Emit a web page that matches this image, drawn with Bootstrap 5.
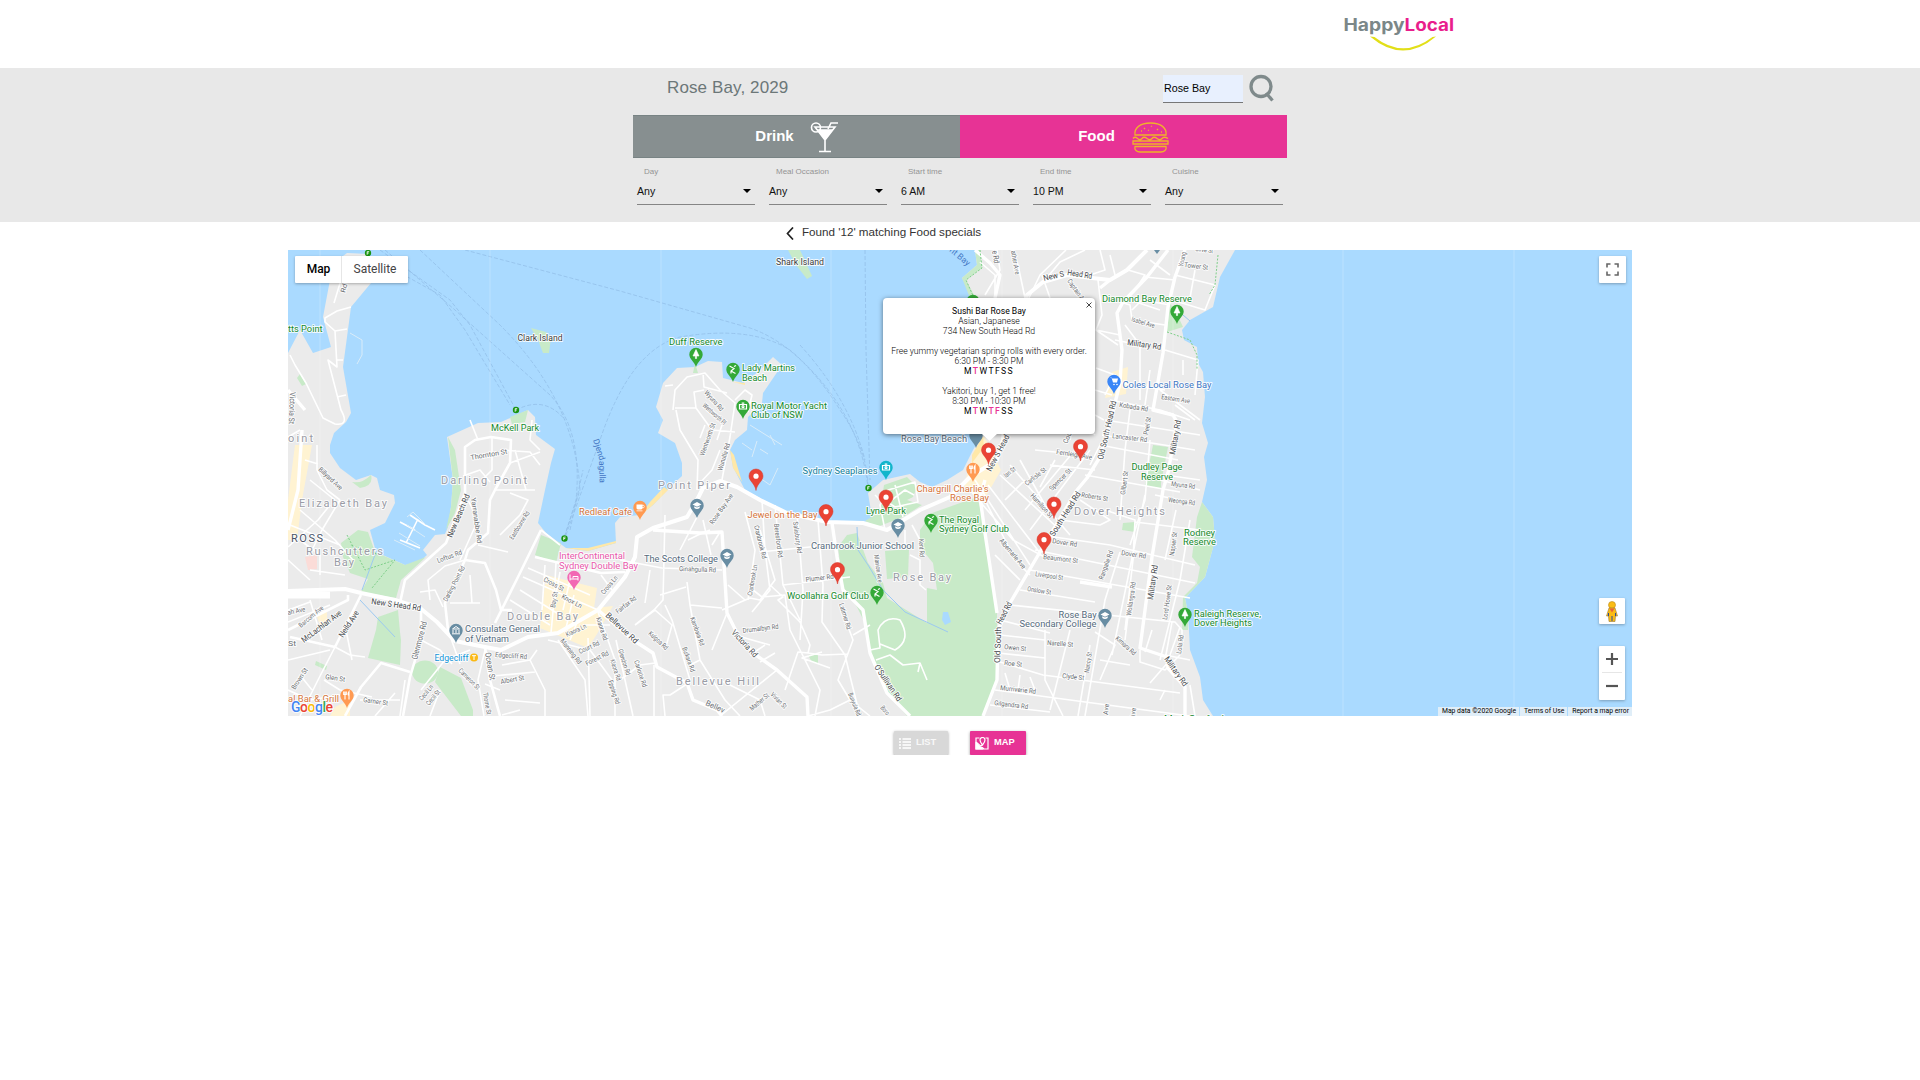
<!DOCTYPE html>
<html lang="en">
<head>
<meta charset="utf-8">
<meta name="viewport" content="width=device-width, initial-scale=1">
<title>HappyLocal</title>
<link href="https://cdn.jsdelivr.net/npm/bootstrap@5.3.0/dist/css/bootstrap.min.css" rel="stylesheet">
<style>
body{font-family:"Liberation Sans",Arial,sans-serif;color:#222;background:#fff;overflow-x:hidden}
.site-head{height:68px;padding:10px 459px 0 0}
.site-head text{font-family:Inter,sans-serif;font-weight:700;font-size:17px}
.filter-band{height:154px;background:#e8e8e8}
.band-inner{width:654px}
.place-row{height:47px;padding:0 11px 0 34px}
.place-name{font-size:17px;line-height:20px;color:#6c7778;letter-spacing:.12px;margin-top:10px}
.search-field{width:80px;height:28px;margin-top:7px;background:#e8f0fe;border:0;border-bottom:1px solid #777;font-size:10.7px;padding:0 1px 2px;color:#000;border-radius:0;outline:0}
.search-icon{margin:5px 0 0 5px}
.kind-btn{height:43px;border:0;border-radius:0;font-weight:700;font-size:15px;color:#fff!important;padding:0 0 0 1px}
.kind-drink{background:#878f90!important;border-bottom:1px solid #788384;border-top:1px solid #788384}
.kind-food{background:#e73395!important}
.filters{padding:9px 4px 0;gap:14px}
.filter-item{width:118px;height:38px;border-bottom:1px solid #858585;font-size:10.6px;color:#111}
.filter-label{font-size:8px;line-height:10px;color:#949494;padding-left:7px}
.filter-value{line-height:12px;margin-top:7.500px}
.filter-value svg{margin-right:4px}
.found{height:28px;font-size:11.650px;padding-left:786px;color:#333}
.found svg{margin:5px 8px 0 0}
.found span{line-height:20px}
.map-box{width:1344px;height:466px;margin:0 auto;background:#aadaff;overflow:hidden}
.map-box>svg{display:block}
.ctl{position:absolute;background:#fff;box-shadow:0 1px 3px rgba(0,0,0,.28);border-radius:1px}
.ctl-type{left:7px;top:6px;width:113px;height:27px;font:12px/27px Roboto,sans-serif;color:#444}
.ctl-type b{font-weight:500;color:#000;width:47px;padding-left:1px;border-right:1px solid #e6e6e6}
.ctl-full{left:1311px;top:6px;width:27px;height:27px}
.ctl-peg{left:1311px;top:348px;width:26px;height:26px}
.ctl-zoom{left:1311px;top:396px;width:26px;height:54px;padding:7px 0 8px}
.ctl-zoom i{width:20px;height:1px;background:#e6e6e6}
.credits{position:absolute;right:0;bottom:0;height:9px;font:6.8px/9px Roboto,sans-serif;color:#000;gap:1px}
.credits span{background:rgba(245,245,245,.72);padding:0 3px 0 4px;white-space:nowrap}
.bubble{position:absolute;left:595px;top:48px;width:212px;height:136px;background:#fff;border-radius:4px;box-shadow:0 1px 5px rgba(0,0,0,.5);font:300 8.650px/10px Roboto,sans-serif;color:#000;padding-top:8px}
.bubble strong{font-weight:400}
.bubble .tip{position:absolute;left:98px;top:135px}
.bubble .shut{position:absolute;right:3px;top:4px}
.days{font-weight:400;letter-spacing:1.350px}
.days em{font-style:normal;font-weight:500;color:#e73395}
.view-row{margin-top:15px;gap:22px}
.view-btn{height:24px;border:0;border-radius:1px;font-weight:700;font-size:9.300px;color:#fff!important;padding:0 0 0 5px;box-shadow:0 1px 3px rgba(0,0,0,.4)}
.view-list{width:54px;background:#d8d8d8!important;color:#f8f8f8!important}
.view-list svg{margin-right:5px}
.view-map{width:56px;background:#e73395!important}
.view-map svg{margin-right:5px}
.map-box text{font-family:Roboto,sans-serif}
.halo text{paint-order:stroke;stroke:#fff;stroke-width:2px;stroke-linejoin:round;stroke-opacity:.85}
</style>
<script src="https://cdn.jsdelivr.net/npm/bootstrap@5.3.0/dist/js/bootstrap.bundle.min.js"></script>
</head>
<body>
<header class="site-head d-flex justify-content-end">
<svg width="120" height="46" viewBox="1341 10 120 46">
<text x="1343.500" y="30.700" textLength="61" lengthAdjust="spacingAndGlyphs" fill="#7b8788">Happy</text><text x="1404.500" y="30.700" textLength="49.500" lengthAdjust="spacingAndGlyphs" fill="#e91e8c">Local</text>
<path d="M1370 36.500Q1403 64.500 1436 36.500L1432.500 37Q1403 59.500 1374.500 37Z" fill="#e2df18"/>
</svg>
</header>
<section class="filter-band">
<div class="band-inner mx-auto">
<div class="place-row d-flex align-items-start">
<div class="place-name me-auto">Rose Bay, 2029</div>
<input class="search-field" value="Rose Bay" aria-label="Suburb">
<svg class="search-icon" width="28" height="30" viewBox="0 0 28 30" fill="none" stroke="#7f8a8b" stroke-width="3.3"><ellipse cx="13" cy="13.500" rx="10" ry="10"/><path d="M18 20L24.500 27.500"/></svg>
</div>
<div class="d-flex">
<button class="btn kind-btn kind-drink w-50 d-flex align-items-center justify-content-center"><span>Drink</span>
<svg class="ms-3" width="29" height="32" viewBox="0 0 29 32" fill="none" stroke="#fff" stroke-width="1.600"><circle cx="6" cy="6.500" r="4.500"/><path d="M5 6H25L15 19ZM15 18V30M9 30.500H21M18 8L21 2H28" /><path d="M8 9H22L15 18Z" fill="#fff"/></svg></button>
<button class="btn kind-btn kind-food w-50 d-flex align-items-center justify-content-center"><span>Food</span>
<svg class="ms-3" width="39" height="32" viewBox="0 0 39 32" fill="none" stroke="#f0b429" stroke-width="1.300"><path d="M4 14C3 7 9 2 19.500 2S36 7 35 14ZM2 17.500Q4 15 6.500 17.500T11 17.500T16 17.500T21 17.500T26 17.500T31 17.500T37 17.500M2 20H37V23H2ZM4 25.500H35C36 29 33 31 30 31H9C6 31 3 29 4 25.500Z"/><path d="M13 7l1 1M20 5l1 .5M26 8l1 1M17 9l1 .5M10 10h1M30 11h1"/></svg></button>
</div>
<div class="filters d-flex">
<div class="filter-item"><div class="filter-label">Day</div><div class="filter-value d-flex justify-content-between align-items-center">Any<svg width="8" height="4"><path d="M0 0H8L4 4Z"/></svg></div></div>
<div class="filter-item"><div class="filter-label">Meal Occasion</div><div class="filter-value d-flex justify-content-between align-items-center">Any<svg width="8" height="4"><path d="M0 0H8L4 4Z"/></svg></div></div>
<div class="filter-item"><div class="filter-label">Start time</div><div class="filter-value d-flex justify-content-between align-items-center">6 AM<svg width="8" height="4"><path d="M0 0H8L4 4Z"/></svg></div></div>
<div class="filter-item"><div class="filter-label">End time</div><div class="filter-value d-flex justify-content-between align-items-center">10 PM<svg width="8" height="4"><path d="M0 0H8L4 4Z"/></svg></div></div>
<div class="filter-item"><div class="filter-label">Cuisine</div><div class="filter-value d-flex justify-content-between align-items-center">Any<svg width="8" height="4"><path d="M0 0H8L4 4Z"/></svg></div></div>
</div>
</div>
</section>
<div class="found d-flex align-items-start"><svg width="8" height="13" viewBox="0 0 8 13" fill="none" stroke="#222" stroke-width="1.700"><path d="M7 .5L1.500 6.500L7 12.500"/></svg><span>Found '12' matching Food specials</span></div>

<main class="map-box position-relative">
<svg width="1344" height="466" viewBox="288 250 1344 466">
<defs>
<path id="drop" d="M0 1C-1.500-4-6.700-7-6.700-11.500A6.700 6.700 0 0 1 6.700-11.500C6.700-7 1.500-4 0 1Z"/>
<g id="red"><path d="M0 1C-1-6-7-8.500-7-13.500A7 7 0 0 1 7-13.500C7-8.500 1-6 0 1Z" fill="#ea4335" stroke="#d5382b" stroke-width=".5"/><circle cy="-13.300" r="2.600" fill="#fff"/></g>
<g id="tree" fill="#fff"><path d="M0-16.500L-3-10H-.6V-7.500H.6V-10H3Z" stroke="#fff" stroke-width=".6"/></g>
<g id="cap" fill="#fff"><path d="M-4.500-12.500L0-15L4.500-12.500L0-10.300ZM-2.700-10.800V-9Q0-7 2.700-9V-10.800L0-9.500Z"/></g>
<g id="golf" stroke="#fff" stroke-width="1.200" fill="none"><path d="M-3.500-15L1-12.500L-2-10V-7.500M-2-10L2.500-7.500M1-14.500L3-15.500"/></g>
<g id="fork" stroke="#fff" stroke-width="1.100" fill="none"><path d="M-2-15.500V-7.500M-3.300-15.500V-12.500H-.7V-15.500M2-7.500V-15.500Q0-12.500 2-11.500"/></g>
<g id="cup" fill="#fff"><path d="M-3.500-14.500H2.500V-11Q2.500-9.500-.5-9.500T-3.500-11ZM-3.500-8.500H2.500V-7.700H-3.500Z"/><circle cx="3" cy="-12.500" r="1.300" fill="none" stroke="#fff" stroke-width=".7"/></g>
<g id="box" fill="none" stroke="#fff" stroke-width="1.200"><path d="M-3.500-13.500H3.500V-9H-3.500ZM-1.300-14.800H1.300"/><circle cy="-11.300" r="1"/></g>
<g id="ferry"><circle r="3.200" fill="#1a9412"/><path d="M-.8 1.700V-1.400H1.200M-.8 0H.8" stroke="#fff" stroke-width=".8" fill="none"/></g>
</defs>
<rect x="288" y="250" width="1344" height="466" fill="#aadaff"/>
<g id="land" fill="#ebebeb">
<path d="M288 353L300 330L313 353L331 347L323 317L330 280L335 262L347 253L368 254L376 262L371 283L351 307L343 367L351 413L346 422L334 433L330 445V453L340 468L356 480L371 475L377 478L380 490L394 495L395 503L385 523L370 530L376 552L405 565L418 563L427 555L423 550L435 535L445 534L448 527L451 507L453 480L447 437L478 423L501 422L528 410L535 417L536 435L555 449L551 463L545 490L538 523L546 533L566 548L588 551L616 543L615 523L620 517L640 515L653 505L670 487L682 476L682 463L675 443L658 433L663 420L656 407L663 383L677 368L695 367L708 361L722 362L723 378L743 383L758 372L773 357L782 365L763 393L762 403L748 417L747 430L735 440L730 450L733 467L745 490L760 498L787 513L813 520L865 523L872 517L868 493L883 480L910 474L920 482L932 487L947 480L963 470L973 450L982 435L985 380L972 295L962 278L977 265L975 250H1235L1220 277L1213 307L1190 320L1182 330L1184 340L1197 347L1198 363L1203 372L1205 397L1202 423L1208 443L1204 457L1207 480L1202 502L1213 517L1215 540L1205 577L1185 598L1188 613L1190 650L1200 677L1203 700L1213 716H288Z"/>
</g>
<g id="parks" fill="#c8eac8">
<path d="M843 587L838 547L847 535L857 533L868 563L883 583L887 598L927 623V588L937 590L933 563L920 547V530L932 513L977 497L980 507L985 533L997 613V680L983 716H907L887 693L870 653L865 623L857 607Z"/>
<path d="M884 485L907 477L917 487L913 497L907 500L922 505L903 517L877 527L865 521L880 512Z"/>
<path d="M885 551L909 549L908 577L887 579ZM341 543L358 530L368 532L375 552L405 565L426 557L401 580L396 598L361 592L368 579L350 573L343 557Z"/>
<path d="M378 617L398 610L400 632L401 640L400 665L368 658L376 630ZM440 667L461 678L473 710V716H461L435 682Z"/>
<ellipse cx="425" cy="672" rx="13" ry="11.500"/>
<path d="M448 437L455 450L461 490L455 513L446 530L451 507L453 480ZM541 535L561 543L556 563L535 555ZM1170 303L1178 316L1183 327L1167 332ZM1153 445L1168 447L1160 488L1145 485Z"/>
<path d="M1202 502L1213 517L1215 540L1205 577L1185 598L1188 613V630H1182L1183 597L1197 583L1200 567L1192 557L1197 517ZM1123 523L1135 522V532L1122 530ZM788 250H800L812 276L807 279L796 265ZM531 328L546 332L551 338L549 353H543L538 340ZM510 417L528 410L525 422L512 424ZM962 278L977 265L975 250H980L982 268L966 280L974 295V298H970ZM808 655L818 654V664L812 662ZM352 482Q362 484 371 475Q374 486 360 488ZM300 374L306 384L302 386L297 378ZM316 661L327 666L326 670L315 665ZM695 363L698 373H693ZM1146 480L1161 483V488L1146 486Z"/>
<ellipse cx="892" cy="638" rx="11" ry="9"/>
</g>
<g id="shops" fill="#fff3d2">
<path d="M288 500L295 445H312L302 500L297 540H288ZM546 575L597 588L594 608L613 606L597 634L588 648L540 628ZM966 478L975 450L984 436L1001 470L984 500L964 488ZM1112 372L1128 367L1126 394L1105 398ZM316 614L327 612V622L320 625ZM335 707L350 700V716H330Z"/>
<path d="M733 382L745 385V383ZM566 548L588 551L616 543V541L588 548ZM640 516L653 505L668 490L664 487L650 502ZM730 450L733 468L742 482L734 455ZM972 455L983 436L984 447L972 463Z" fill="#ffe8a8"/>
<path d="M305 557L317 555V569L308 570Z" fill="#fbdcd8"/>
</g>
<g id="minor" fill="none" stroke="#fff" stroke-width="1.600" stroke-linejoin="round">
<path d="M334 303L341 280M351 307L337 311L325 318V322L335 331L337 367L328 360L341 410Q350 426 335 424L323 418L306 383L295 365L290 355M335 331L347 329M337 360H343M337 397L346 395M317 470L327 490L340 500M288 437L300 430M317 470V445M305 460L318 464M310 480L335 500"/>
<path d="M300 510L335 540L353 560M288 547L318 520L330 505M288 560L310 580M340 500L322 530L312 550M310 570L345 575M300 540L320 555V575M290 525L340 545M288 610L310 602M288 622L330 605M288 660L330 650M300 716L318 680L335 647L350 655L365 657M310 600L322 640M345 625L352 660M288 690L310 700L340 695M300 675L312 690M324 680L340 690L372 697M375 716L395 693M360 700H400M421 690L445 660L470 650M430 716L440 690M405 680L400 716M421 640L440 650L452 664M448 630L460 664M485 650L478 680L484 716M500 690L485 684"/>
<path d="M502 665L530 660L545 690V716M493 676L535 672M505 700L540 703M502 715L520 710M537 650L530 660M541 530L560 545M556 563L554 600L551 633M523 577L598 610M528 568L590 595M545 565L542 610M560 572L555 600M570 580L563 610M574 595L566 628M520 590L560 615M510 600L550 625M548 640L590 650L612 680M570 640L578 620M588 638L590 716M598 612L615 660V716M616 640L625 680L633 716M558 640L585 680L588 716M583 625H610M601 575L612 590M603 605L625 575M470 420L478 440M492 437V470L482 480M463 476L480 470L490 482M500 450L530 452L540 465M510 463L540 452M515 450L526 490M532 420L530 440L540 450M495 490H535M510 493L528 500L520 515L500 535M478 545L508 552M460 560L478 520L468 500M430 600L428 580L445 566L465 560M443 607L435 590L420 592M450 603H480M470 575L472 603M415 530L400 522M410 515L425 525L435 530M400 540L420 548M406 543L418 519"/>
<path d="M673 410L675 390L687 377L705 373L720 390L735 403L730 437L721 485M675 408L696 408L712 430L735 432M703 373L704 387L727 393M696 408L694 392L704 390M676 410L680 430L698 460L697 490M720 450L712 470L698 485M722 425L717 440M735 400L745 390L752 395L748 412M665 386L673 385M700 438L705 425M703 520L711 555M697 517L680 550M665 515L663 600L654 610L635 625M620 560L662 568L722 570M650 570L645 603M687 582L690 605L700 660L725 700L740 716M686 587L660 595M690 605L722 608M722 610L750 598L760 600L775 580L760 530M728 585L745 600M745 512L755 550L748 600M762 500L765 550L770 590L752 612M770 585L783 597L778 600L800 622L810 645L808 653L798 652L785 690M775 505L783 585L800 620M797 513L803 590L800 640M818 520L823 585L822 622L845 655L851 680L860 716M760 552L830 545M783 585L850 577M840 605L853 640L838 680L850 700L870 716M853 635L870 625M753 590L762 597L785 595L790 630L820 690L815 716M665 605L672 620L690 680M635 625L655 610L672 625L665 650M700 660L690 665M620 680L640 665L655 663M654 665V716M690 682L670 695H663L665 716M720 680L760 700L765 716M727 613L712 650M735 635L752 640L770 645M750 655L765 645M760 662L775 653M777 670L720 716M808 653L822 655L848 654M688 540L698 535L710 530M712 545L720 532M822 652L802 658L830 668M808 716L830 710L850 700"/>
<path d="M885 530L880 505L888 490L915 482L918 502L895 507L880 497M875 495L885 505L905 490L914 495M895 485L903 517M910 555L920 560V585L926 590M912 525L920 540M905 550V530M870 650L880 648L878 630Q885 615 900 620Q912 640 895 650L880 644M876 660L890 655L903 665L920 663L927 680M920 663L918 672"/>
<path d="M970 490L1013 540L1050 560M985 500L1015 560L1030 575M995 555L1020 580M975 480L1030 565M988 485L1040 553M1000 475L1060 530M1010 465L1070 535M1020 460L1045 505M1040 487L1055 460M1025 510L1075 450M1030 530L1090 450M1005 500L1025 480M1060 520L1100 525L1110 520L1080 500M1085 475L1180 492M1090 465L1100 445L1178 460M1050 465L1095 470M1035 450L1085 455M1070 440L1075 415L1095 435M1040 535L1110 545L1195 565M1035 550L1195 583M1030 570L1190 598M1020 590L1095 602M1010 605L1175 622L1182 630V640M1000 620L1050 633M1000 635L1045 640M998 653L1045 658M1000 662L1043 675L1180 693M995 690L1190 716M990 705L1050 712M1120 552L1105 600L1085 716M1105 510L1135 520L1133 560L1125 630M1145 495L1112 655M1176 510L1165 560M1190 520L1180 580L1160 660M1130 600L1125 640M1152 630L1145 652M1172 622L1165 660M1180 627L1170 655M1095 632L1115 645L1100 680M1045 630V680L1063 716M1070 630L1050 710M1090 645L1078 716M1140 650V662L1165 670L1180 655M1150 683L1170 660M1100 660L1130 665M1190 660L1165 655M1190 685L1195 716M1165 690L1160 700M1005 673L1010 690M1020 675L1018 690M1030 677L1035 690M1135 522L1200 530M1155 495L1195 503M1160 480L1200 490"/>
<path d="M1100 250L1105 270L1090 275M1085 250L1060 262L1045 280M1066 250L1040 275L1028 300M997 250L1000 270L985 295M980 262L995 275V295M1012 250L1018 265L1025 298M1042 275L1050 298M1098 280L1102 315L1096 330L1118 345M1110 255L1115 275M1128 270L1145 275L1135 290M1145 277L1175 280M1175 275L1215 285L1205 310L1172 300M1195 270L1190 298M1150 260L1170 275M1120 302L1130 305L1132 320L1165 325M1132 310L1142 300L1170 305M1125 325L1140 345L1115 340M1160 310L1130 300M1096 330L1120 335M1165 350L1198 360L1195 395M1183 360V375M1140 345V400M1120 383L1165 390M1150 370L1145 405M1160 390L1200 420M1175 405L1195 420M1110 400L1160 410L1190 420M1105 420L1200 435M1102 435L1195 450M1130 410L1125 450L1120 520M1150 440L1145 500L1130 545M1096 368L1115 375L1105 395M1104 420L1095 415M1165 475L1200 480M1095 390L1112 395"/>
</g>
<g id="major" fill="none" stroke="#fff" stroke-width="3.400" stroke-linejoin="round">
<path d="M288 591L345 589L361 593L395 600L420 608L437 622L455 641L485 647L501 650L528 637L558 633L598 610L625 577L635 557L637 537L653 528L687 517L697 500L703 488L720 481L737 487L760 500L787 513L827 522L863 523L887 530L920 510L950 497L970 477L997 460L1003 440L1010 350L1027 295L1043 282L1067 275L1092 278L1110 280L1127 270L1147 250" stroke-width="4"/>
<path d="M288 595H330" stroke-width="7"/>
<path d="M1168 250L1147 277L1123 302L1117 313L1122 350L1120 383L1110 423L1100 457L1087 478L1077 490L1047 540L1010 603L998 630L997 680L983 716M1185 250L1175 277L1168 307L1163 353L1153 410L1173 415L1177 422L1168 473L1163 490L1152 557L1142 633L1140 648L1167 657L1168 668L1185 687V716"/>
<path d="M465 493L446 543L405 580L400 603M465 493V447L475 440L491 437L511 440L510 463L495 490L490 500L488 533L468 550L465 560L445 603L448 630L455 641M465 560L485 563L496 590L501 610L512 610M541 530L518 577L495 623M535 557L601 573L625 572M485 647L490 680L500 716M421 610V640L410 677L403 716M410 672L381 663L361 687L345 716M361 595L335 647L290 637M348 595V600L288 630" stroke-width="2.600"/>
<path d="M653 530L700 533L722 532L727 613L738 635L753 653L777 670L807 697L808 716M598 610L633 640L653 653L657 667L687 683L693 700L717 710L722 716M832 523L837 557L843 590L863 610L870 653L887 693L910 716M980 497L985 533L997 613M985 480L980 497M288 390L305 410M302 430L298 490L288 530M975 250L990 263L1000 275L995 298M1110 280L1100 288"/>
<path d="M1080 582L1112 587"/>
</g>
<g fill="none" stroke="#9cc9f2"><path d="M857 527L858 550L868 565L883 590L905 612L948 632M360 600L395 637M376 552L362 590M1183 315L1190 321"/><path d="M942 620L943 612L948 612L951 622L945 625Z" fill="#aadaff" stroke="none"/></g>
<g fill="none" stroke="#7fcf8a" stroke-dasharray="2 1.500"><path d="M347 535L365 570L395 560L372 588M380 555L350 545M1167 332L1190 340L1197 355V370M1218 255L1215 285L1209 295M980 250L982 268L966 280L974 298"/></g>
<g id="ferries" fill="none" stroke="#93bfe8" stroke-width=".8" stroke-dasharray="4 2">
<path d="M380 250L450 300L470 325L516 410M370 256L440 295L465 330L510 405M420 250L500 325Q575 400 580 490L565 535M385 250L455 310L550 395Q583 430 576 500L565 535M516 410Q545 395 565 420M465 250L620 291L750 328Q800 345 840 410Q868 450 868 488M566 535L600 440Q630 350 680 337Q750 325 790 350Q860 410 868 488M865 250L866 350L870 480M800 345Q850 400 865 460M570 530L583 470"/></g>
<path d="M320 250V716M490 250V716M661 250V716M831 250V716M1002 250V716M1173 250V716M1343 250V716M1514 250V716" stroke="#fff" opacity=".22"/>
<g fill="none" stroke="#d9ecf9" stroke-width="1"><path d="M750 425L782 445M770 435L775 445M742 443L752 450M757 441L752 457M760 449L768 454M778 468L770 485L760 478M350 333L362 340V355L357 364M394 540L415 550M399 533L420 546M407 525L425 537M413 512L426 525M407 517L413 512"/></g>

<g id="areas" class="halo" font-size="11" fill="#9a9ca6" style="letter-spacing:2px">
<text x="288" y="442" textLength="27">oint</text><text x="299" y="507" textLength="90">Elizabeth Bay</text><text x="306" y="555" textLength="79">Rushcutters</text><text x="334" y="566" textLength="22">Bay</text>
<text x="441" y="484" textLength="88">Darling Point</text><text x="507" y="620" textLength="73">Double Bay</text><text x="658" y="489" textLength="74">Point Piper</text><text x="676" y="685" textLength="85">Bellevue Hill</text><text x="893" y="581" textLength="60">Rose Bay</text><text x="1074" y="514.500" textLength="93">Dover Heights</text>
<text x="291" y="542" textLength="34" fill="#4a5468">ROSS</text>
</g>
<g id="streets" class="halo" font-size="6.900" fill="#6b6f73">
<text transform="translate(471 460) rotate(-10)" textLength="37">Thornton St</text><text transform="translate(318 470) rotate(43)" textLength="30">Billyard Ave</text><text transform="translate(345 293) rotate(-75)" textLength="9">Rd</text><text transform="translate(290 392) rotate(92)" textLength="32" font-size="8">Victoria St</text>
<text transform="translate(452 538) rotate(-67)" textLength="46" font-size="8.300" fill="#44474a">New Beach Rd</text><text transform="translate(471 498) rotate(82)" textLength="46">Yarranabbe Rd</text><text transform="translate(513 540) rotate(-58)" textLength="32">Eastbourne Rd</text><text transform="translate(438 563) rotate(-20)" textLength="26">Loftus Rd</text><text transform="translate(447 602) rotate(-62)" textLength="39">Darling Point Rd</text>
<text transform="translate(371 604) rotate(8)" textLength="50" font-size="8.300" fill="#44474a">New S Head Rd</text><text transform="translate(304 643) rotate(-37)" textLength="48" font-size="8.300" fill="#44474a">McLachlan Ave</text><text transform="translate(343 638) rotate(-57)" textLength="30" font-size="8.300" fill="#44474a">Neild Ave</text><text transform="translate(301 628) rotate(-40)" textLength="30">Barcom Ave</text><text transform="translate(417 660) rotate(-75)" textLength="39" font-size="8.300">Glenmore Rd</text><text transform="translate(288 615) rotate(-12)" textLength="18">ah Ave</text><text x="288" y="646" textLength="8" font-size="8">St</text><text transform="translate(295 690) rotate(-57)" textLength="24">Brown St</text><text transform="translate(325 679) rotate(8)" textLength="20">Glen St</text><text transform="translate(363 702) rotate(8)" textLength="25">Garner St</text><text transform="translate(422 701) rotate(-50)" textLength="18">Cecil Ln</text><text transform="translate(429 706) rotate(-50)" textLength="18">Cecil St</text><text transform="translate(458 671) rotate(45)" textLength="27">Cameron St</text><text transform="translate(483 693) rotate(80)" textLength="22">Thorne St</text><text transform="translate(485 653) rotate(80)" textLength="28" font-size="8.300">Ocean St</text><text transform="translate(495 657) rotate(4)" textLength="32">Edgecliff Rd</text><text transform="translate(501 684) rotate(-10)" textLength="24">Albert St</text>
<text transform="translate(543 581) rotate(28)" textLength="22">Cross St</text><text transform="translate(561 598) rotate(28)" textLength="22">Knox Ln</text><text transform="translate(555 608) rotate(-80)" textLength="16">Bay St</text><text transform="translate(567 637) rotate(-25)" textLength="22">Kiaora Ln</text><text transform="translate(560 641) rotate(52)" textLength="30">Manning Rd</text><text transform="translate(580 654) rotate(-25)" textLength="22">Court Rd</text><text transform="translate(587 666) rotate(-27)" textLength="25">Forest Rd</text><text transform="translate(604 595) rotate(-50)" textLength="22">Cross Ln</text><text transform="translate(596 618) rotate(72)" textLength="24">Kiaora Rd</text><text transform="translate(610 660) rotate(72)" textLength="22">Kiaora Rd</text><text transform="translate(618 650) rotate(72)" textLength="27">Glendon Rd</text><text transform="translate(608 681) rotate(72)" textLength="25">Epping Rd</text><text transform="translate(605 616) rotate(43)" textLength="41" font-size="8.300" fill="#44474a">Bellevue Rd</text><text transform="translate(618 614) rotate(-38)" textLength="24">Fairfax Rd</text><text transform="translate(634 661) rotate(72)" textLength="28">Carlotte Rd</text><text transform="translate(648 634) rotate(43)" textLength="24">Kulgoa Rd</text><text transform="translate(690 618) rotate(70)" textLength="30">Kambala Rd</text><text transform="translate(682 648) rotate(70)" textLength="26">Bulkara Rd</text><text transform="translate(705 705) rotate(24)" textLength="20" font-size="8">Bellev</text>
<text transform="translate(704 393) rotate(48)" textLength="25">Wyuna Rd</text><text transform="translate(702 406) rotate(42)" textLength="29">Wentworth Pl</text><text transform="translate(704 456) rotate(-70)" textLength="34">Wentworth St</text><text transform="translate(722 471) rotate(-73)" textLength="28">Wunulla Rd</text><text transform="translate(713 525) rotate(-55)" textLength="36">Rose Bay Ave</text><text transform="translate(754 526) rotate(76)" textLength="34">Cranbrook Rd</text><text transform="translate(774 524) rotate(83)" textLength="34">Beresford Rd</text><text transform="translate(793 522) rotate(82)" textLength="32">Salisbury Rd</text><text transform="translate(752 596) rotate(-80)" textLength="31">Cranbrook Ln</text><text transform="translate(679 571) rotate(2)" textLength="37">Ginahgulla Rd</text><text transform="translate(806 582) rotate(-7)" textLength="28">Plumer Rd</text><text transform="translate(839 604) rotate(73)" textLength="27">Latimer Rd</text><text transform="translate(743 633) rotate(-7)" textLength="36">Drumalbyn Rd</text><text transform="translate(731 633) rotate(47)" textLength="34" font-size="8.300" fill="#44474a">Victoria Rd</text><text transform="translate(770 695) rotate(45)" textLength="20">Vivian St</text><text transform="translate(752 711) rotate(-40)" textLength="23">Mather St</text><text transform="translate(848 694) rotate(68)" textLength="24">Bunyula Rd</text><text transform="translate(880 708) rotate(50)" textLength="10">Boro</text><text transform="translate(874 667) rotate(56)" textLength="42" font-size="8.300" fill="#44474a">O'Sullivan Rd</text><text transform="translate(874 555) rotate(82)" textLength="28">Manion Ave</text><text transform="translate(919 539) rotate(88)" textLength="18">Kent Rd</text>
<text transform="translate(1000 663) rotate(-88)" textLength="36" font-size="8.300" fill="#44474a">Old South</text><text transform="translate(1001 625) rotate(-62)" textLength="24" font-size="8.300" fill="#44474a">Head Rd</text><text transform="translate(1054 537) rotate(-58)" textLength="51" font-size="8.300" fill="#44474a">South Head Rd</text><text transform="translate(1103 460) rotate(-77)" textLength="60" font-size="8.300" fill="#44474a">Old South Head Rd</text><text transform="translate(1127 345) rotate(8)" textLength="34" font-size="8.300" fill="#44474a">Military Rd</text><text transform="translate(1175 455) rotate(-80)" textLength="35" font-size="8.300" fill="#44474a">Military Rd</text><text transform="translate(1153 600) rotate(-82)" textLength="35" font-size="8.300" fill="#44474a">Military Rd</text><text transform="translate(1164 659) rotate(55)" textLength="34" font-size="8.300" fill="#44474a">Military Rd</text><text transform="translate(991 472) rotate(-62)" textLength="40" font-size="8.300" fill="#44474a">New S Head</text>
<text transform="translate(1044 281) rotate(-13)" textLength="21" font-size="8.300" fill="#44474a">New S</text><text transform="translate(1067 275) rotate(9)" textLength="25" font-size="8.300" fill="#44474a">Head Rd</text><text transform="translate(1067 281) rotate(55)" textLength="24">Captain A</text><text transform="translate(992 251) rotate(80)" textLength="13" font-size="8">e Rd</text><text transform="translate(1011 251) rotate(80)" textLength="24">ather Ave</text><text transform="translate(1183 267) rotate(-78)" textLength="15">Young</text><text transform="translate(1184 267) rotate(7)" textLength="24">Tower St</text><text transform="translate(1195 251) rotate(7)" textLength="18">Clive St</text>
<text transform="translate(1131 321) rotate(17)" textLength="24">Isabel Ave</text><text transform="translate(1161 399) rotate(9)" textLength="29">Eastern Ave</text><text transform="translate(1119 407) rotate(9)" textLength="29">Kobada Rd</text><text transform="translate(1148 435) rotate(-80)" textLength="18">Peel St</text><text transform="translate(1112 438) rotate(7)" textLength="35">Lancaster Rd</text><text transform="translate(1056 454) rotate(9)" textLength="36">Fernleigh Ave</text><text transform="translate(1067 444) rotate(-65)" textLength="16">Court</text><text transform="translate(1027 486) rotate(-38)" textLength="25">Carlisle St</text><text transform="translate(1052 491) rotate(-45)" textLength="28">Spencer St</text><text transform="translate(1030 496) rotate(48)" textLength="30">Hamilton St</text><text transform="translate(1006 478) rotate(-38)" textLength="13">Ian St</text><text transform="translate(1081 497) rotate(9)" textLength="27">Roberts St</text><text transform="translate(1125 495) rotate(-82)" textLength="24">Gilbert St</text><text transform="translate(1171 486) rotate(7)" textLength="24">Myuna Rd</text><text transform="translate(1168 502) rotate(7)" textLength="27">Weonga Rd</text><text transform="translate(999 541) rotate(50)" textLength="37">Albemarle Ave</text><text transform="translate(1052 543) rotate(9)" textLength="25">Dover Rd</text><text transform="translate(1043 559) rotate(7)" textLength="35">Beaumont St</text><text transform="translate(1035 576) rotate(9)" textLength="28">Liverpool St</text><text transform="translate(1027 591) rotate(9)" textLength="24">Onslow St</text><text transform="translate(1121 555) rotate(8)" textLength="25">Dover Rd</text><text transform="translate(1103 580) rotate(-70)" textLength="30">Rangalie Rd</text><text transform="translate(1174 556) rotate(-82)" textLength="24">Napier St</text><text transform="translate(1131 616) rotate(-82)" textLength="34">Wollangra Rd</text><text transform="translate(1167 620) rotate(-82)" textLength="35">Lord Howe St</text><text transform="translate(1181 654) rotate(-82)" textLength="19">Lola Rd</text><text transform="translate(1115 639) rotate(42)" textLength="25">Kimara Rd</text><text transform="translate(1047 645) rotate(4)" textLength="26">Narelle St</text><text transform="translate(1004 649) rotate(6)" textLength="22">Owen St</text><text transform="translate(1004 665) rotate(6)" textLength="18">Roe St</text><text transform="translate(1089 673) rotate(-82)" textLength="21">Nancy St</text><text transform="translate(1062 678) rotate(6)" textLength="22">Clyde St</text><text transform="translate(1000 690) rotate(6)" textLength="36">Murriverie Rd</text><text transform="translate(994 705) rotate(7)" textLength="34">Gilgandra Rd</text><text transform="translate(1108 715) rotate(-85)" textLength="11">Ave</text><text transform="translate(1135 719) rotate(-85)" textLength="11">Ave</text>
</g>
<g id="water-names" font-size="8.500" fill="#4477c4"><text transform="translate(593 440) rotate(72)" textLength="22">Djend</text><text transform="translate(599 461) rotate(88)" textLength="22">agulla</text><text transform="translate(949 251) rotate(40)" textLength="24">nt Bay</text></g>

<g id="pins">
<g fill="#34a938"><g transform="translate(696 366)"><use href="#drop"/><use href="#tree"/></g><g transform="translate(733 381)"><use href="#drop"/><use href="#golf"/></g><g transform="translate(743 418)"><use href="#drop"/><use href="#box"/></g><g transform="translate(931 532)"><use href="#drop"/><use href="#golf"/></g><g transform="translate(877 604)"><use href="#drop"/><use href="#golf"/></g><g transform="translate(1177 323)"><use href="#drop"/><use href="#tree"/></g><g transform="translate(1185 626)"><use href="#drop"/><use href="#tree"/></g><g transform="translate(973 313)"><use href="#drop"/></g></g>
<g fill="#688da3"><g transform="translate(697 517)"><use href="#drop"/><use href="#cap"/></g><g transform="translate(727 567)"><use href="#drop"/><use href="#cap"/></g><g transform="translate(898 537)"><use href="#drop"/><use href="#cap"/></g><g transform="translate(1105 627)"><use href="#drop"/><use href="#cap"/></g><g transform="translate(976 447)"><use href="#drop"/></g><g transform="translate(456 642)"><use href="#drop"/><path d="M-3.500-13L0-15.500L3.500-13ZM-3-12V-9M0-12V-9M3-12V-9M-4-8.200H4" stroke="#fff" stroke-width="1"/></g><path d="M1154 250H1160L1157 254Z"/></g>
<g fill="#ff9a52"><g transform="translate(640 519)"><use href="#drop"/><use href="#cup"/></g><g transform="translate(973 481)"><use href="#drop"/><use href="#fork"/></g><g transform="translate(347 707)"><use href="#drop"/><use href="#fork"/></g></g>
<g transform="translate(886 479)" fill="#12b5cb"><use href="#drop"/><use href="#box"/></g>
<g transform="translate(574 589)" fill="#f268b3"><use href="#drop"/><path d="M-4-14.500V-8.500M-4-10H4V-8.500M4-10V-12.500H-1V-10.500" stroke="#fff" fill="none"/></g>
<g transform="translate(1114 393)" fill="#3a86f7"><use href="#drop"/><path d="M-4-15.500H-2.500L-1-10.500H3L4-14.500H-2Z" fill="#fff"/><circle cx="0" cy="-8.500" r=".8" fill="#fff"/><circle cx="3" cy="-8.500" r=".8" fill="#fff"/></g>
<use href="#ferry" x="368" y="253"/><use href="#ferry" x="516" y="410"/><use href="#ferry" x="564.500" y="538.500"/><use href="#ferry" x="868.500" y="488"/>
<circle cx="474" cy="657.500" r="4" fill="#fbb914"/><path d="M472 655.700H476M474 655.700V660" stroke="#fff"/>
</g>
<g id="places" class="halo" font-size="9.300" font-weight="400">
<g fill="#158a2d"><text x="288" y="332" textLength="34.500">tts Point</text><text x="491" y="431" textLength="48">McKell Park</text><text x="669" y="344.500" textLength="53.500">Duff Reserve</text><text x="742" y="371" textLength="53">Lady Martins</text><text x="742" y="380.500" textLength="25">Beach</text><text x="751" y="408.500" textLength="76">Royal Motor Yacht</text><text x="751" y="418" textLength="52">Club of NSW</text><text x="866" y="514" textLength="40">Lyne Park</text><text x="939" y="523" textLength="40">The Royal</text><text x="939" y="532" textLength="70">Sydney Golf Club</text><text x="787" y="599" textLength="82">Woollahra Golf Club</text><text x="1102" y="302" textLength="90">Diamond Bay Reserve</text><text x="1131.500" y="470" textLength="51">Dudley Page</text><text x="1141" y="479.500" textLength="32">Reserve</text><text x="1184" y="535.500" textLength="31">Rodney</text><text x="1183" y="544.500" textLength="33">Reserve</text><text x="1194" y="616.500" textLength="67">Raleigh Reserve,</text><text x="1194" y="625.500" textLength="58">Dover Heights</text><text x="1164" y="721.500" textLength="60">Mark Sanford</text></g>
<g fill="#3c3c3c"><text x="776" y="264.500" textLength="48">Shark Island</text><text x="517.500" y="341" textLength="45">Clark Island</text></g>
<g fill="#566b7d"><text x="465" y="632" textLength="75">Consulate General</text><text x="465" y="641.500" textLength="44">of Vietnam</text><text x="644" y="561.500" textLength="74">The Scots College</text><text x="811" y="548.500" textLength="103">Cranbrook Junior School</text><text x="901" y="442" textLength="66">Rose Bay Beach</text><text x="1058.500" y="618" textLength="38">Rose Bay</text><text x="1019.500" y="627" textLength="77">Secondary College</text></g>
<g fill="#d6753c"><text x="579" y="514.500" textLength="53">Redleaf Cafe</text><text x="747.500" y="518" textLength="70">Jewel on the Bay</text><text x="916.500" y="492" textLength="72">Chargrill Charlie's</text><text x="950" y="501" textLength="39">Rose Bay</text><text x="288" y="701.500" textLength="51">al Bar &amp; Grill</text></g>
<g fill="#e959ab"><text x="559" y="559" textLength="66">InterContinental</text><text x="559" y="568.500" textLength="79">Sydney Double Bay</text></g>
<text x="802.500" y="474" textLength="75" fill="#12809a">Sydney Seaplanes</text><text x="434.500" y="660.500" textLength="34" fill="#1295d8">Edgecliff</text><text x="1122.500" y="387.500" textLength="89" fill="#3f78c5">Coles Local Rose Bay</text>
</g>
<g id="specials"><use href="#red" x="756" y="489.500"/><use href="#red" x="988.500" y="463.500"/><use href="#red" x="1080.500" y="460"/><use href="#red" x="1054" y="517.500"/><use href="#red" x="1044" y="553"/><use href="#red" x="886" y="510.500"/><use href="#red" x="826" y="525"/><use href="#red" x="837.500" y="583"/></g>
<g class="halo" font-size="14" font-weight="500"><text x="291" y="711.500" textLength="42"><tspan fill="#4285f4">G</tspan><tspan fill="#ea4335">o</tspan><tspan fill="#fbbc05">o</tspan><tspan fill="#4285f4">g</tspan><tspan fill="#34a853">l</tspan><tspan fill="#ea4335">e</tspan></text></g>
</svg>
<div class="ctl ctl-type d-flex text-center"><b>Map</b><span class="flex-fill">Satellite</span></div>
<div class="ctl ctl-full d-flex align-items-center justify-content-center"><svg width="13" height="13" viewBox="0 0 13 13" fill="none" stroke="#666" stroke-width="1.600"><path d="M1 4.500V1H4.500M8.500 1H12V4.500M12 8.500V12H8.500M4.500 12H1V8.500"/></svg></div>
<div class="ctl ctl-peg d-flex align-items-center justify-content-center"><svg width="12" height="21" viewBox="0 0 12 21"><circle cx="6" cy="4" r="3.500" fill="#fbbc14" stroke="#b98a20" stroke-width=".6"/><path d="M3 7H9L11.500 15H9.500L9 20.500H3L2.500 15H.5Z" fill="#fbbc14" stroke="#9a7b35" stroke-width=".6"/><path d="M3.500 7.500H8.500L6 11.500Z" fill="#e8633a"/><path d="M6 15V20M2.500 12V15M9.500 12V15" stroke="#2c4a9a"/></svg></div>
<div class="ctl ctl-zoom d-flex flex-column align-items-center justify-content-between"><svg width="12" height="12" viewBox="0 0 12 12" stroke="#555" stroke-width="2.200"><path d="M0 6H12M6 0V12"/></svg><i></i><svg width="12" height="12" viewBox="0 0 12 12" stroke="#555" stroke-width="2.200"><path d="M0 6H12"/></svg></div>
<div class="credits d-flex"><span>Map data ©2020 Google</span><span>Terms of Use</span><span>Report a map error</span></div>
<div class="bubble text-center">
<div><strong>Sushi Bar Rose Bay</strong></div><div>Asian, Japanese</div><div>734 New South Head Rd</div><br>
<div>Free yummy vegetarian spring rolls with every order.</div><div>6:30 PM - 8:30 PM</div><div class="days">M<em>T</em>WTFSS</div><br>
<div>Yakitori, buy 1, get 1 free!</div><div>8:30 PM - 10:30 PM</div><div class="days">M<em>T</em>W<em>TF</em>SS</div>
<svg class="tip" width="17" height="9"><path d="M0 0H17L8.500 8Z" fill="#fff"/></svg>
<svg class="shut" width="6" height="6" viewBox="0 0 6 6" stroke="#444" stroke-width="1"><path d="M.5 .5L5.500 5.500M5.500 .5L.5 5.500"/></svg>
</div>
</main>
<div class="view-row d-flex justify-content-center">
<button class="btn view-btn view-list d-flex align-items-center"><svg width="12" height="11" viewBox="0 0 12 11" stroke="#fff" stroke-width="1.300"><path d="M0 1H2M3.500 1H12M0 4H2M3.500 4H12M0 7H2M3.500 7H12M0 10H2M3.500 10H12"/></svg>LIST</button>
<button class="btn view-btn view-map d-flex align-items-center"><svg width="14" height="13" viewBox="0 0 14 13" fill="none" stroke="#fff" stroke-width="1.200"><path d="M4.500 1H1V12H13V1H10.500M1 5L9 12M3 12L7 8"/><path d="M1 6V12H7Z" fill="#fff"/><path d="M7.500 8C5 5 5 4 5 3A2.500 2.500 0 0 1 10 3C10 4 10 5 7.500 8Z"/></svg>MAP</button>
</div>
<script>
// Scale glyphs along with spacing so the words of a fitted label stay apart
document.querySelectorAll('#streets text, #places text').forEach(function (t) {
  t.setAttribute('lengthAdjust', 'spacingAndGlyphs');
});
</script>
</body>
</html>
